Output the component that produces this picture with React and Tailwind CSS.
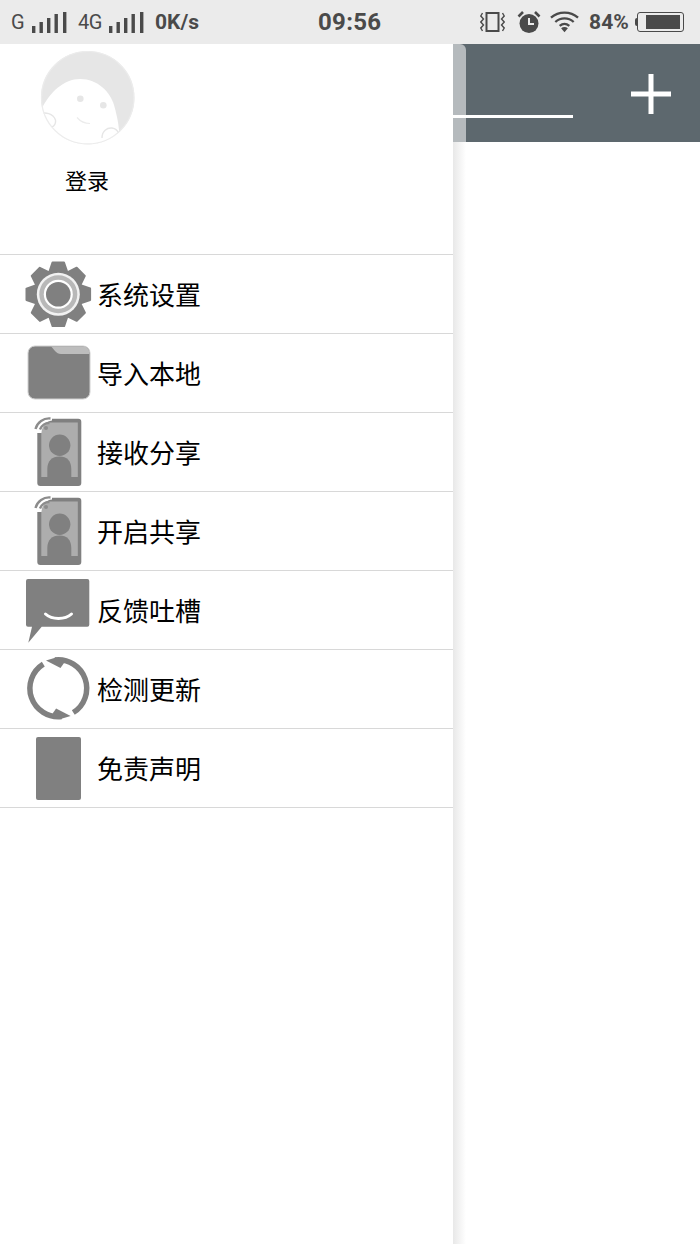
const GRAY = "#808080";

function Signal() {
  const bars = [
    [0, 7],
    [7.5, 11],
    [15, 15],
    [22.5, 19],
    [31, 21],
  ];
  return (
    <svg width="35" height="21" viewBox="0 0 35 21" className="shrink-0">
      {bars.map(([x, h]) => (
        <rect key={x} x={x} y={21 - h} width="3.4" height={h} fill="#4a4a4a" />
      ))}
    </svg>
  );
}

function StatusBar() {
  return (
    <div className="relative h-[44px] flex items-center bg-[#ebebeb] text-[#4a4a4a] font-['Roboto',sans-serif]">
      <div className="flex items-center pl-[11px]">
        <span className="text-[20px] leading-none w-[21px]">G</span>
        <Signal />
        <span className="text-[20px] leading-none ml-[11px] w-[31px] tracking-[-0.5px]">4G</span>
        <Signal />
        <span className="text-[21px] font-bold leading-none ml-[11px]">0K/s</span>
      </div>
      <span className="absolute left-[318px] text-[24px] font-bold leading-none tracking-[0.3px]">09:56</span>
      <div className="ml-auto flex items-center pr-[16px]">
        <svg width="25" height="22" viewBox="0 0 25 22" fill="none" stroke="#4a4a4a">
          <rect x="6.5" y="2" width="12" height="18" strokeWidth="2" />
          <path d="M2.5 2 L0.8 5 L3.5 8 L0.8 11 L3.5 14 L0.8 17 L2.5 20" strokeWidth="1.4" />
          <path d="M22.5 2 L24.2 5 L21.5 8 L24.2 11 L21.5 14 L24.2 17 L22.5 20" strokeWidth="1.4" />
        </svg>
        <svg width="24" height="24" viewBox="0 0 24 24" className="ml-[12px]">
          <circle cx="12" cy="13.5" r="9.5" fill="#4a4a4a" />
          <path d="M12 8 V14 H17" stroke="#ebebeb" strokeWidth="2" fill="none" />
          <path d="M1.5 6.5 L6 2 M22.5 6.5 L18 2" stroke="#4a4a4a" strokeWidth="2.6" />
        </svg>
        <svg width="29" height="22" viewBox="0 0 30 22" fill="none" stroke="#4a4a4a" strokeWidth="2.4" className="ml-[9px]">
          <path d="M1 6.5 C9 -0.5 21 -0.5 29 6.5" />
          <path d="M5.5 11 C11 6 19 6 24.5 11" />
          <path d="M10 15 C13 12.5 17 12.5 20 15" />
          <path d="M11.5 17.5 L15 21.5 L18.5 17.5 C16.5 15.8 13.5 15.8 11.5 17.5 Z" fill="#4a4a4a" stroke="none" />
        </svg>
        <span className="text-[21px] font-bold leading-none ml-[10px] tracking-[0.1px]">84%</span>
        <div className="ml-[6px] w-[2px] h-[8px] bg-[#4a4a4a] rounded-l-sm" />
        <div className="w-[47px] h-[20px] border border-[#4a4a4a] rounded-[3px] flex items-center justify-end pr-[3px]">
          <div className="w-[34px] h-[14px] bg-[#4a4a4a]" />
        </div>
      </div>
    </div>
  );
}

function Avatar() {
  return (
    <svg width="96" height="96" viewBox="0 0 96 96" className="block">
      <defs>
        <clipPath id="avatar-clip">
          <circle cx="47.7" cy="47.7" r="46.7" />
        </clipPath>
      </defs>
      <circle cx="47.7" cy="47.7" r="46.7" fill="#e6e6e6" />
      <g clipPath="url(#avatar-clip)">
        <path d="M2 58 C10 42 24 29 40 29 C58 29 70 42 74 55 C76 62 78 70 79 80 L79 96 L0 96 Z" fill="#fff" />
        <circle cx="70" cy="85.3" r="6.5" fill="#fff" />
        <rect x="60" y="86" width="40" height="12" fill="#fff" />
        <path d="M0 64 C5 62 13 63 15.5 70 C16 74 14 76 12 77" fill="#fff" stroke="#e6e6e6" strokeWidth="1.4" />
        <path d="M62 88 C62 81 67 77.5 72 78 C76 78.5 78 81 79 84" fill="none" stroke="#e6e6e6" strokeWidth="1.4" />
      </g>
      <circle cx="47.7" cy="47.7" r="46.2" fill="none" stroke="#ececec" strokeWidth="1.2" />
      <circle cx="40.3" cy="48.7" r="3.3" fill="#e6e6e6" />
      <circle cx="63.3" cy="55.3" r="3.3" fill="#e6e6e6" />
      <path d="M37 67.5 C40 71 45 73.5 50 73.5" stroke="#ececec" strokeWidth="1.2" fill="none" />
    </svg>
  );
}

function GearIcon() {
  const teeth = [0, 45, 90, 135, 180, 225, 270, 315];
  return (
    <svg width="97" height="78" viewBox="0 0 97 78">
      {teeth.map((a) => (
        <path
          key={a}
          d="M52.5 7.5 H64 L68.3 20 H48.3 Z"
          fill={GRAY}
          stroke={GRAY}
          strokeWidth="2"
          strokeLinejoin="round"
          transform={`rotate(${a} 58.3 39.3)`}
        />
      ))}
      <circle cx="58.3" cy="39.3" r="25" fill={GRAY} />
      <circle cx="58.3" cy="39.3" r="21.5" fill="#f2f2f2" />
      <circle cx="58.3" cy="39.3" r="19" fill="#b8b8b8" />
      <circle cx="58.3" cy="39.3" r="14.5" fill="#fff" />
      <circle cx="58.3" cy="39.3" r="12.3" fill={GRAY} />
    </svg>
  );
}

function FolderIcon() {
  return (
    <svg width="97" height="78" viewBox="0 0 97 78">
      <rect x="28" y="12" width="62" height="53" rx="7" fill={GRAY} stroke="#d0d0d0" strokeWidth="1" />
      <path d="M51 12.5 H83 C87 12.5 89.5 15 89.5 20 H61 C56 20 54 15 51 12.5 Z" fill="#bdbdbd" />
    </svg>
  );
}

function ShareIcon() {
  return (
    <svg width="97" height="78" viewBox="0 0 97 78">
      <rect x="37.3" y="5.7" width="44" height="67.3" rx="3" fill={GRAY} />
      <rect x="41.3" y="9.5" width="36.5" height="54.5" fill="#adadad" />
      <circle cx="59.7" cy="32.3" r="10.7" fill={GRAY} />
      <path d="M47.3 64 V56 C47.3 48 52 43.5 59.5 43.5 C67 43.5 71.3 48 71.3 56 V64 Z" fill={GRAY} />
      <path d="M36 20 V4 H52 V7.5 C46 8 42 13 41.5 20 Z" fill="#fff" />
      <g fill="none" stroke="#8c8c8c" strokeWidth="2.4">
        <path d="M35.5 16 A14 14 0 0 1 50.5 5.5" />
        <path d="M40 16.5 A9.5 9.5 0 0 1 49.5 10" />
      </g>
      <circle cx="46" cy="15" r="2" fill="#8c8c8c" />
    </svg>
  );
}

function ChatIcon() {
  return (
    <svg width="97" height="78" viewBox="0 0 97 78">
      <path d="M28 8 H87.3 A2 2 0 0 1 89.3 10 V53.7 A2 2 0 0 1 87.3 55.7 H41.7 L28.3 71.7 L32 55.7 H28 A2 2 0 0 1 26 53.7 V10 A2 2 0 0 1 28 8 Z" fill={GRAY} />
      <path d="M45.5 43 C52 49 65 49 71.5 43" stroke="#fff" strokeWidth="3" strokeLinecap="round" fill="none" />
    </svg>
  );
}

function RefreshIcon() {
  const half = (
    <>
      <path d="M55 10 A28.5 28.5 0 0 1 73.3 62.5" fill="none" stroke={GRAY} strokeWidth="5.5" />
      <path d="M46 10.5 L56 7.5 L64 13 L60.5 18 Z" fill={GRAY} />
    </>
  );
  return (
    <svg width="97" height="78" viewBox="0 0 97 78">
      {half}
      <g transform="rotate(180 58.3 38.3)">{half}</g>
    </svg>
  );
}

function DocIcon() {
  return (
    <svg width="97" height="78" viewBox="0 0 97 78">
      <rect x="36" y="8" width="45" height="63" rx="2" fill={GRAY} />
    </svg>
  );
}

const menuItems = [
  { label: "系统设置", icon: GearIcon },
  { label: "导入本地", icon: FolderIcon },
  { label: "接收分享", icon: ShareIcon },
  { label: "开启共享", icon: ShareIcon },
  { label: "反馈吐槽", icon: ChatIcon },
  { label: "检测更新", icon: RefreshIcon },
  { label: "免责声明", icon: DocIcon },
];

function Drawer() {
  return (
    <div className="w-[453px] shrink-0 bg-white">
      <div className="h-[211px] border-b border-[#d8d8d8] pt-[6px] pl-[40px]">
        <Avatar />
        <div className="w-[94px] mt-[17px] text-center text-[22px] leading-[32px] text-black">登录</div>
      </div>
      {menuItems.map(({ label, icon: Icon }) => (
        <div key={label} className="h-[79px] flex items-center border-b border-[#d8d8d8]">
          <Icon />
          <span className="text-[26px] leading-none text-black">{label}</span>
        </div>
      ))}
    </div>
  );
}

function MainPane() {
  return (
    <div className="flex-1 flex flex-col bg-white">
      <div className="relative h-[98px] bg-[#5d686e] flex items-center justify-end pr-[29px]">
        <div className="absolute left-0 top-0 w-[13px] h-full bg-[#b5babd] rounded-tr-md" />
        <div className="absolute left-0 top-[71px] w-[120px] h-[3px] bg-white" />
        <svg width="40" height="40" viewBox="0 0 40 40" className="mt-[2px]">
          <path d="M20 0 V40 M0 20 H40" stroke="#fff" strokeWidth="5" />
        </svg>
      </div>
      <div className="flex-1 w-[13px] bg-gradient-to-r from-[#e8e8e8] to-white" />
    </div>
  );
}

export default function App() {
  return (
    <div className="w-[700px] h-[1244px] flex flex-col overflow-hidden bg-white font-['Noto_Sans_CJK_SC','Noto_Sans',sans-serif]">
      <StatusBar />
      <div className="flex-1 flex">
        <Drawer />
        <MainPane />
      </div>
    </div>
  );
}
